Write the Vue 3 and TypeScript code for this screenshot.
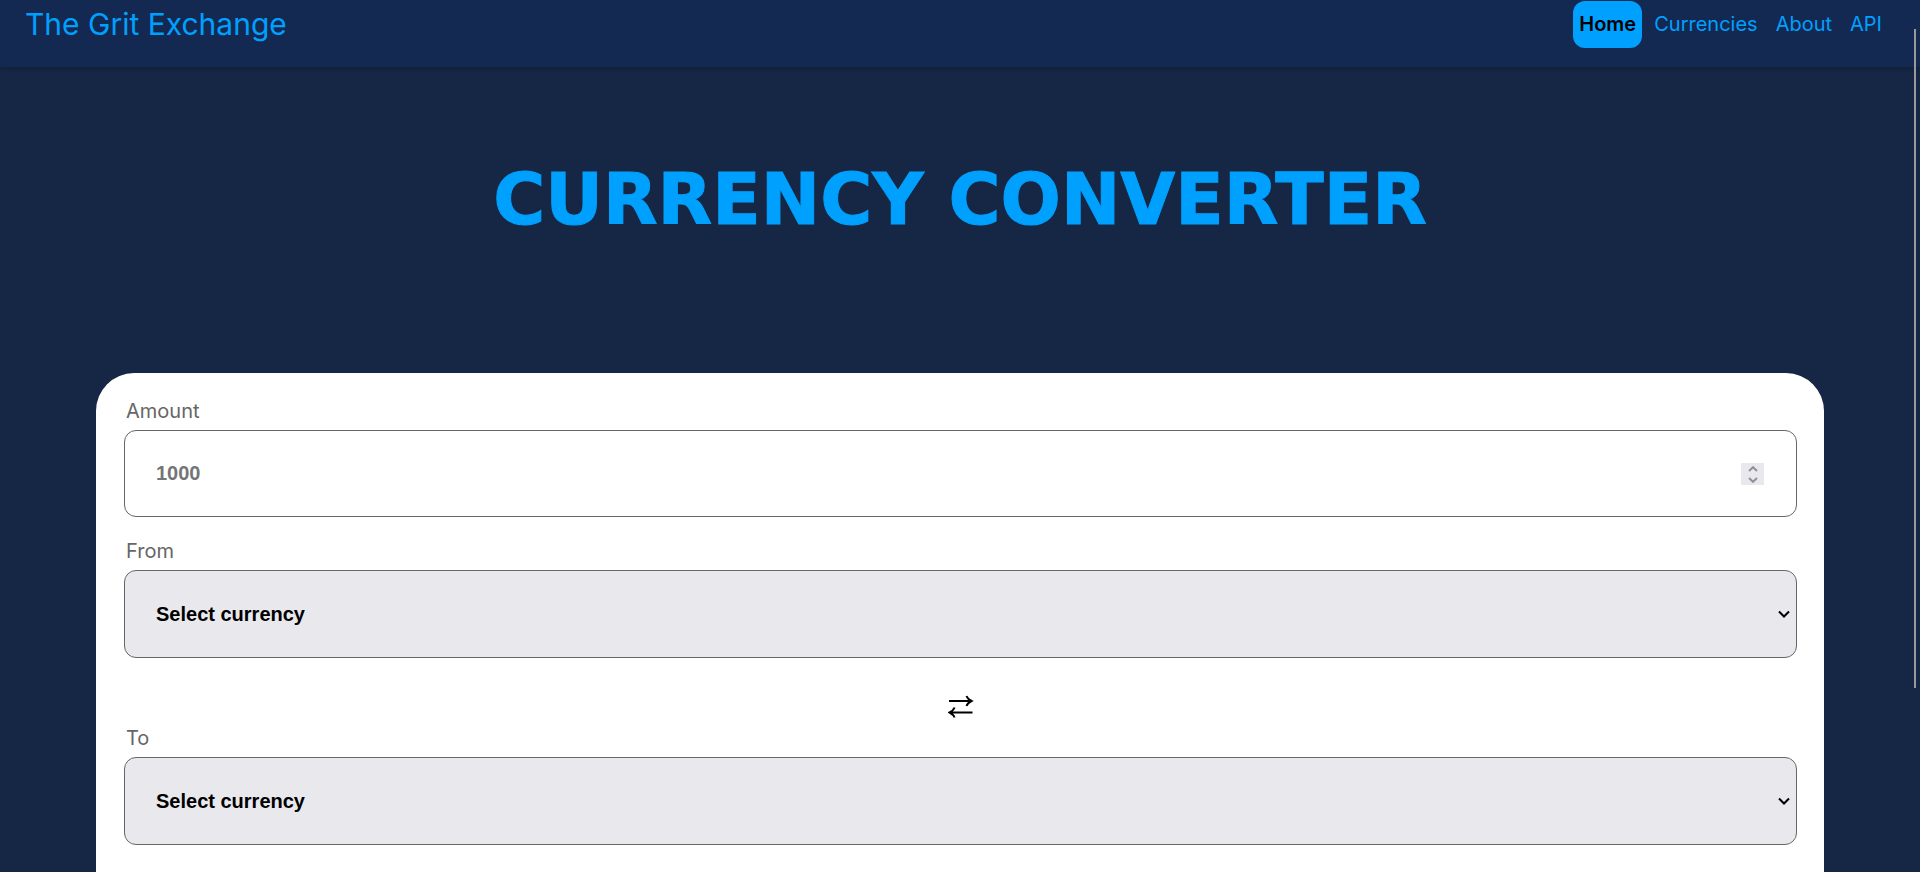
<script setup lang="ts">
import { ref } from 'vue'

interface NavItem {
  label: string
  href: string
  active?: boolean
}

const navItems: NavItem[] = [
  { label: 'Home', href: '#home', active: true },
  { label: 'Currencies', href: '#currencies' },
  { label: 'About', href: '#about' },
  { label: 'API', href: '#api' },
]

const currencies: string[] = ['USD', 'EUR', 'GBP', 'JPY', 'NGN']

const amount = ref<number | null>(null)
const from = ref('')
const to = ref('')

function step(delta: number): void {
  amount.value = (Number(amount.value) || 0) + delta
}

function swap(): void {
  const previous = from.value
  from.value = to.value
  to.value = previous
}
</script>

<template>
  <div class="page">
    <header class="header">
      <a class="brand" href="#home">The Grit Exchange</a>
      <nav class="nav">
        <a
          v-for="item in navItems"
          :key="item.label"
          class="nav-link"
          :class="{ active: item.active }"
          :href="item.href"
        >{{ item.label }}</a>
      </nav>
    </header>

    <main class="main">
      <h1 class="title">CURRENCY CONVERTER</h1>

      <form class="card" @submit.prevent>
        <label class="label" for="amount">Amount</label>
        <div class="control">
          <input id="amount" v-model="amount" class="field" type="number" placeholder="1000" />
          <div class="stepper">
            <button type="button" class="step" aria-label="Increase" @click="step(1)">
              <svg viewBox="0 0 10 6" width="10" height="6"><path d="M1 5 5 1.2 9 5" /></svg>
            </button>
            <button type="button" class="step" aria-label="Decrease" @click="step(-1)">
              <svg viewBox="0 0 10 6" width="10" height="6"><path d="M1 1 5 4.8 9 1" /></svg>
            </button>
          </div>
        </div>

        <label class="label" for="from">From</label>
        <div class="control">
          <select id="from" v-model="from" class="field select">
            <option value="">Select currency</option>
            <option v-for="code in currencies" :key="code" :value="code">{{ code }}</option>
          </select>
          <svg class="chevron" viewBox="0 0 12 8" width="12" height="8"><path d="M1 1.5 6 6.5 11 1.5" /></svg>
        </div>

        <button type="button" class="swap" aria-label="Swap currencies" @click="swap">
          <svg viewBox="0 0 26 24" width="26" height="24">
            <path d="M1 7H23M18.500 2Q19.500 5 23.500 7Q19.500 9 18.500 12M24.500 18.500H2.500M6.500 13.500Q5.500 16.500 1.500 18.500Q5.500 20.500 6.500 23.500" />
          </svg>
        </button>

        <label class="label" for="to">To</label>
        <div class="control">
          <select id="to" v-model="to" class="field select">
            <option value="">Select currency</option>
            <option v-for="code in currencies" :key="code" :value="code">{{ code }}</option>
          </select>
          <svg class="chevron" viewBox="0 0 12 8" width="12" height="8"><path d="M1 1.5 6 6.5 11 1.5" /></svg>
        </div>
      </form>
    </main>

    <div class="scroll-thumb"></div>
  </div>
</template>

<style>
body {
  background: #152744;
}
</style>

<style scoped>
.page {
  display: flex;
  flex-direction: column;
  min-height: 100vh;
  background: #152744;
  font-family: Inter, "Liberation Sans", sans-serif;
  font-size: 20px;
}

.header {
  display: flex;
  justify-content: space-between;
  align-items: flex-start;
  box-sizing: border-box;
  height: 67px;
  padding: 1px 32px 0 25px;
  background: #132952;
  box-shadow: 0 2px 4px rgba(0, 0, 0, 0.15);
}

.brand {
  color: #00a0ff;
  font-size: 30px;
  line-height: 47px;
  text-decoration: none;
}

.nav {
  display: flex;
  gap: 6px;
}

.nav-link {
  padding: 0 6px;
  border-radius: 12px;
  color: #00a0ff;
  line-height: 47px;
  text-decoration: none;
}

.nav-link.active {
  background: #00a0ff;
  color: #000;
  font-weight: 600;
}

.main {
  display: flex;
  flex: 1;
  flex-direction: column;
}

.title {
  margin: 83px 0 123px;
  color: #00a0ff;
  font-family: "Arial Black", "DejaVu Sans", sans-serif;
  font-size: 71px;
  font-weight: 900;
  line-height: 100px;
  text-align: center;
  -webkit-text-stroke: 1px #00a0ff;
}

.card {
  display: flex;
  flex: 1;
  flex-direction: column;
  margin: 0 5%;
  padding: 25px 27px 27px 28px;
  border-radius: 38px 38px 0 0;
  background: #fff;
}

.label {
  padding-left: 2px;
  color: #666;
  line-height: 26px;
}

.control {
  position: relative;
  display: flex;
  margin: 6px 0 21px;
}

.field {
  box-sizing: border-box;
  width: 100%;
  height: 87px;
  padding: 0 31px;
  border: 1px solid #666;
  border-radius: 12px;
  background: #fff;
  color: #000;
  font-family: "Liberation Sans", Arial, sans-serif;
  font-size: 20px;
  font-weight: 700;
  appearance: none;
}

.field::placeholder {
  color: #757575;
  opacity: 1;
}

.field[type="number"] {
  appearance: textfield;
}

.field::-webkit-inner-spin-button {
  margin: 0;
  appearance: none;
}

.select {
  height: 88px;
  background: #e9e9ed;
}

.stepper {
  position: absolute;
  top: 33px;
  right: 33px;
  display: flex;
  flex-direction: column;
  width: 23px;
  height: 22px;
  background: #e9e9ed;
}

.step {
  display: flex;
  flex: 1;
  align-items: center;
  justify-content: center;
  padding: 0;
  border: 0;
  background: none;
}

.step path {
  fill: none;
  stroke: #8f8f9d;
  stroke-width: 2;
}

.chevron {
  position: absolute;
  top: 40px;
  right: 7px;
  pointer-events: none;
}

.chevron path {
  fill: none;
  stroke: #000;
  stroke-width: 2;
}

.swap {
  display: flex;
  align-self: center;
  margin: 15px 0 7px;
  padding: 0;
  border: 0;
  background: none;
}

.swap path {
  fill: none;
  stroke: #000;
  stroke-width: 2;
}

.scroll-thumb {
  position: fixed;
  top: 29px;
  right: 4px;
  width: 2px;
  height: 659px;
  background: #999;
}
</style>
